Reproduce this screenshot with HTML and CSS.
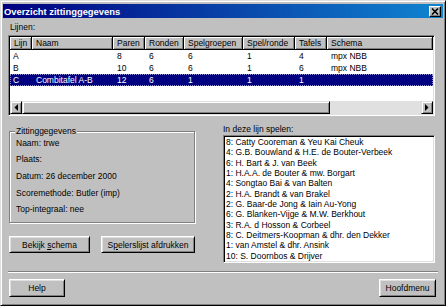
FILE: index.html
```html
<!DOCTYPE html>
<html lang="nl">
<head>
    <meta charset="UTF-8">
    <meta name="viewport" content="width=device-width, initial-scale=1.0">
    <title>Overzicht zittinggegevens</title>
    <link rel="stylesheet" href="styles.css">
</head>
<body>

<div class="window">
    <div class="titlebar">
        <span class="title">Overzicht zittinggegevens</span>
        <span class="close-btn">
            <svg width="8" height="7" viewBox="0 0 8 7"><path d="M1 0.5 L7 6.5 M7 0.5 L1 6.5" stroke="#000" stroke-width="1.6"/></svg>
        </span>
    </div>

    <div class="content">
        <div class="label">Lijnen:</div>

        <!-- Lijnen list view -->
        <div class="listview">
            <div class="lv-body">
                <div class="lv-cols lv-header">
                    <div>Lijn</div>
                    <div>Naam</div>
                    <div>Paren</div>
                    <div>Ronden</div>
                    <div>Spelgroepen</div>
                    <div>Spel/ronde</div>
                    <div>Tafels</div>
                    <div>Schema</div>
                </div>
                <div class="lv-cols lv-row">
                    <div>A</div><div></div><div>8</div><div>6</div><div>6</div><div>1</div><div>4</div><div>mpx NBB</div>
                </div>
                <div class="lv-cols lv-row">
                    <div>B</div><div></div><div>10</div><div>6</div><div>6</div><div>1</div><div>6</div><div>mpx NBB</div>
                </div>
                <div class="lv-cols lv-row selected">
                    <div>C</div><div>Combitafel A-B</div><div>12</div><div>6</div><div>1</div><div>1</div><div>1</div><div></div>
                </div>
            </div>
            <div class="hscroll">
                <div class="sb-btn">
                    <svg width="4" height="7" viewBox="0 0 4 7"><path d="M4 0 L0.5 3.5 L4 7 Z" fill="#000"/></svg>
                </div>
                <div class="sb-thumb"></div>
                <div class="sb-track"></div>
                <div class="sb-btn">
                    <svg width="4" height="7" viewBox="0 0 4 7"><path d="M0 0 L3.5 3.5 L0 7 Z" fill="#000"/></svg>
                </div>
            </div>
        </div>

        <div class="middle">
            <div class="left-col">
                <div class="group">
                    <span class="group-title">Zittinggegevens</span>
                    <div class="info-row">Naam: trwe</div>
                    <div class="info-row">Plaats:</div>
                    <div class="info-row">Datum: 26 december 2000</div>
                    <div class="info-row">Scoremethode: Butler (imp)</div>
                    <div class="info-row">Top-integraal: nee</div>
                </div>
                <div class="button-row">
                    <button class="btn btn-schema">Bekijk <u>s</u>chema</button>
                    <button class="btn btn-print">S<u>p</u>elerslijst afdrukken</button>
                </div>
            </div>

            <div class="right-col">
                <div class="label">In deze lijn spelen:</div>
                <ul class="listbox" id="spelersList"></ul>
            </div>
        </div>

        <div class="separator"></div>

        <div class="footer">
            <button class="btn btn-help">Help</button>
            <button class="btn btn-menu">Hoofdmenu</button>
        </div>
    </div>
</div>

<script>
    // paren in deze lijn
    const spelers = [
        '8: Catty Cooreman & Yeu Kai Cheuk',
        '4: G.B. Bouwland & H.E. de Bouter-Verbeek',
        '6: H. Bart & J. van Beek',
        '1: H.A.A. de Bouter & mw. Borgart',
        '4: Songtao Bai & van Balten',
        '2: H.A. Brandt & van Brakel',
        '2: G. Baar-de Jong & Iain Au-Yong',
        '6: G. Blanken-Vijge & M.W. Berkhout',
        '3: R.A. d Hosson & Corbeel',
        '8: C. Deitmers-Koopman & dhr. den Dekker',
        '1: van Amstel & dhr. Ansink',
        '10: S. Doornbos & Drijver'
    ];

    const list = document.getElementById('spelersList');
    spelers.forEach(naam => {
        const li = document.createElement('li');
        li.textContent = naam;
        list.appendChild(li);
    });
</script>

</body>
</html>
```

FILE: styles.css
```css
body {
    margin: 0;
    padding: 0;
    background-color: #c0c0c0;
    font-family: "Liberation Sans", Arial, sans-serif;
    font-size: 8.5px;
    color: #000;
}

.window {
    width: 446px;
    height: 306px;
    box-sizing: border-box;
    border: 1px solid;
    border-color: #dfdfdf #000 #000 #dfdfdf;
    box-shadow: inset 1px 1px #fff, inset -1px -1px #808080;
    padding: 3px 2px 2px 2px;
    background-color: #c0c0c0;
    display: flex;
    flex-direction: column;
}

/* title bar */
.titlebar {
    height: 14px;
    flex-shrink: 0;
    display: flex;
    align-items: center;
    justify-content: space-between;
    padding: 0 2px 0 1px;
    background: linear-gradient(to right, #000080, #1084d0);
}

.title {
    color: #fff;
    font-weight: bold;
    font-size: 9.4px;
}

.close-btn {
    width: 12px;
    height: 11px;
    box-sizing: border-box;
    display: flex;
    align-items: center;
    justify-content: center;
    background-color: #c0c0c0;
    border: 1px solid;
    border-color: #fff #000 #000 #fff;
    box-shadow: inset -1px -1px #808080;
}

.content {
    flex: 1;
    padding: 0 8px 0 6px;
}

.label {
    line-height: 11px;
    height: 11px;
}

.content > .label {
    margin-top: 4px;
    margin-left: 1px;
}

/* list view */
.listview {
    margin-top: 2px;
    margin-left: -1px;
    height: 81px;
    box-sizing: border-box;
    border: 1px solid;
    border-color: #808080 #fff #fff #808080;
    box-shadow: inset 1px 1px #000, inset -1px -1px #dfdfdf;
    padding: 1px;
    display: flex;
    flex-direction: column;
}

.lv-body {
    flex: 1;
    background-color: #fff;
    overflow: hidden;
}

.lv-cols {
    display: grid;
    grid-template-columns: 22px 81px 32px 39px 59px 52px 32px 1fr;
}

.lv-cols > div {
    padding-left: 4px;
    white-space: nowrap;
    overflow: hidden;
}

.lv-cols > div:first-child {
    padding-left: 3px;
}

.lv-header {
    height: 13px;
    line-height: 12px;
}

.lv-header > div {
    background-color: #c0c0c0;
    border-right: 1px solid #000;
    border-bottom: 1px solid #000;
    box-shadow: inset 1px 1px #fff, inset -1px -1px #808080;
}

.lv-header > div:first-child {
    padding-left: 4px;
}

.lv-row {
    height: 12px;
    line-height: 12px;
}

.lv-row.selected {
    background-color: #000080;
    color: #fff;
    outline: 1px dotted #8f8fd0;
    outline-offset: -1px;
}

/* horizontal scrollbar */
.hscroll {
    height: 13px;
    display: flex;
    background-color: #e0e0e0;
}

.sb-btn,
.sb-thumb {
    box-sizing: border-box;
    background-color: #c0c0c0;
    border: 1px solid;
    border-color: #dfdfdf #000 #000 #dfdfdf;
    box-shadow: inset 1px 1px #fff, inset -1px -1px #808080;
}

.sb-btn {
    width: 12px;
    display: flex;
    align-items: center;
    justify-content: center;
}

.sb-thumb {
    width: 308px;
}

.sb-track {
    flex: 1;
}

/* middle part */
.middle {
    display: grid;
    grid-template-columns: 186px 212px;
    justify-content: space-between;
}

.group {
    position: relative;
    margin-top: 15px;
    height: 92px;
    box-sizing: border-box;
    border: 1px solid #808080;
    box-shadow: inset 1px 1px #fff, 1px 1px #fff;
    padding: 2.5px 0 0 6px;
}

.group-title {
    position: absolute;
    top: -6px;
    left: 5px;
    padding: 0 1px;
    line-height: 11px;
    background-color: #c0c0c0;
}

.info-row {
    height: 16.7px;
    line-height: 16.7px;
}

.button-row {
    display: flex;
    gap: 11px;
    margin-top: 13px;
}

.btn {
    height: 17px;
    padding: 0;
    box-sizing: border-box;
    font-family: inherit;
    font-size: 8.5px;
    color: #000;
    background-color: #c0c0c0;
    border: 1px solid;
    border-color: #fff #000 #000 #fff;
    box-shadow: inset 1px 1px #dfdfdf, inset -1px -1px #808080;
    cursor: pointer;
}

.btn-schema {
    width: 81px;
}

.btn-print {
    width: 94px;
}

.right-col .label {
    margin-top: 8px;
}

.listbox {
    list-style: none;
    margin: 0;
    height: 128px;
    box-sizing: border-box;
    padding: 1px 0 1px 2px;
    background-color: #fff;
    border: 1px solid;
    border-color: #808080 #fff #fff #808080;
    box-shadow: inset 1px 1px #000, inset -1px -1px #dfdfdf;
    overflow: hidden;
}

.listbox li {
    height: 10.33px;
    line-height: 10.33px;
    white-space: nowrap;
}

.separator {
    margin: 8px -3px 0 -1px;
    border-top: 1px solid #808080;
    border-bottom: 1px solid #fff;
}

.footer {
    display: flex;
    justify-content: space-between;
    margin-top: 6px;
    margin-right: -1px;
}

.footer .btn {
    height: 18px;
}

.btn-help {
    width: 56px;
}

.btn-menu {
    width: 57px;
}
```
